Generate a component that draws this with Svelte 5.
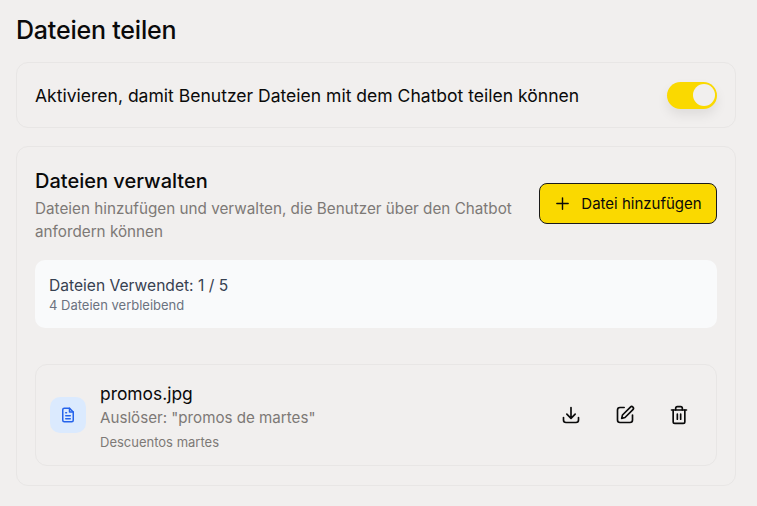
<script>
  let enabled = $state(true);

  const file = {
    name: 'promos.jpg',
    trigger: 'Auslöser: "promos de martes"',
    note: 'Descuentos martes',
  };
</script>

<div class="page">
  <h1>Dateien teilen</h1>

  <section class="card toggle-card">
    <span class="toggle-label">Aktivieren, damit Benutzer Dateien mit dem Chatbot teilen können</span>
    <button class="toggle" class:on={enabled} aria-label="Aktivieren" onclick={() => (enabled = !enabled)}>
      <span class="knob"></span>
    </button>
  </section>

  <section class="card manage">
    <div class="manage-head">
      <div class="manage-text">
        <h2>Dateien verwalten</h2>
        <p>Dateien hinzufügen und verwalten, die Benutzer über den Chatbot anfordern können</p>
      </div>
      <button class="add">
        <svg width="17" height="17" viewBox="0 0 24 24" fill="none" stroke="currentColor" stroke-width="2" stroke-linecap="round"><path d="M12 4v16M4 12h16" /></svg>
        Datei hinzufügen
      </button>
    </div>

    <div class="usage">
      <div class="usage-main">Dateien Verwendet: 1 / 5</div>
      <div class="usage-sub">4 Dateien verbleibend</div>
    </div>

    <div class="file">
      <div class="file-icon">
        <svg width="18" height="18" viewBox="0 0 24 24" fill="none" stroke="#2563eb" stroke-width="2" stroke-linecap="round" stroke-linejoin="round">
          <path d="M14 3H7a2 2 0 0 0-2 2v14a2 2 0 0 0 2 2h10a2 2 0 0 0 2-2V8z" />
          <path d="M14 3v5h5" />
          <path d="M9 9h1M9 13h6M9 17h6" />
        </svg>
      </div>
      <div class="file-info">
        <div class="file-name">{file.name}</div>
        <div class="file-trigger">{file.trigger}</div>
        <div class="file-note">{file.note}</div>
      </div>
      <div class="actions">
        <button class="action" aria-label="Herunterladen">
          <svg width="20" height="20" viewBox="0 0 24 24" fill="none" stroke="currentColor" stroke-width="2" stroke-linecap="round" stroke-linejoin="round">
            <path d="M3 15v3a3 3 0 0 0 3 3h12a3 3 0 0 0 3-3v-3" />
            <path d="M12 3v13M7 11l5 5 5-5" />
          </svg>
        </button>
        <button class="action" aria-label="Bearbeiten">
          <svg width="20" height="20" viewBox="0 0 24 24" fill="none" stroke="currentColor" stroke-width="2" stroke-linecap="round" stroke-linejoin="round">
            <path d="M11 3H6a3 3 0 0 0-3 3v12a3 3 0 0 0 3 3h12a3 3 0 0 0 3-3v-6" />
            <path d="M18.5 2.5a2.1 2.1 0 0 1 3 3L12 15l-4 1 1-4z" />
          </svg>
        </button>
        <button class="action" aria-label="Löschen">
          <svg width="20" height="20" viewBox="0 0 24 24" fill="none" stroke="currentColor" stroke-width="2" stroke-linecap="round" stroke-linejoin="round">
            <path d="M3 6h18" />
            <path d="M8 6V4a2 2 0 0 1 2-2h4a2 2 0 0 1 2 2v2" />
            <path d="M5 6v14a2 2 0 0 0 2 2h10a2 2 0 0 0 2-2V6" />
            <path d="M10 11v6M14 11v6" />
          </svg>
        </button>
      </div>
    </div>
  </section>
</div>

<style>
  :global(body) {
    margin: 0;
    background: #f1efee;
    font-family: Inter, "Noto Sans", sans-serif;
    color: #0a0a0a;
  }

  .page {
    width: 720px;
    padding: 14px 0 0 16px;
  }

  h1 {
    margin: 0 0 15px;
    font-size: 25px;
    line-height: 33px;
    font-weight: 500;
    letter-spacing: -0.2px;
  }

  .card {
    border: 1px solid #e8e6e5;
    border-radius: 12px;
    box-sizing: border-box;
  }

  .toggle-card {
    height: 66px;
    padding: 0 18px;
    display: flex;
    align-items: center;
    justify-content: space-between;
    margin-bottom: 18px;
  }

  .toggle-label {
    font-size: 17.55px;
    padding-top: 1px;
  }

  .toggle {
    width: 50px;
    height: 27px;
    border: none;
    border-radius: 14px;
    background: #d4d4d4;
    display: flex;
    align-items: center;
    justify-content: flex-start;
    padding: 0 2px;
    box-shadow: 0 6px 12px rgba(0, 0, 0, 0.08);
  }

  .toggle.on {
    background: #fad900;
    justify-content: flex-end;
  }

  .knob {
    width: 22px;
    height: 22px;
    border-radius: 50%;
    background: #f1efee;
  }

  .manage {
    height: 340px;
    padding: 21px 18px 0;
  }

  .manage-head {
    display: flex;
    justify-content: space-between;
    align-items: flex-start;
  }

  .manage-text {
    width: 490px;
  }

  h2 {
    margin: 0 0 3px;
    font-size: 20px;
    line-height: 26px;
    font-weight: 500;
  }

  .manage-text p {
    margin: 0;
    font-size: 15.25px;
    line-height: 23px;
    color: #7d7976;
  }

  .add {
    width: 178px;
    height: 41px;
    margin-top: 15px;
    border: 1px solid #1a1a1a;
    border-radius: 8px;
    background: #fad900;
    color: #0a0a0a;
    font: inherit;
    font-size: 15px;
    display: flex;
    align-items: center;
    justify-content: center;
    gap: 10px;
  }

  .usage {
    margin-top: 17px;
    height: 68px;
    box-sizing: border-box;
    padding: 15px 14px 0;
    background: #f9fafb;
    border-radius: 10px;
  }

  .usage-main {
    font-size: 15.6px;
    line-height: 21px;
    color: #374151;
  }

  .usage-sub {
    font-size: 13px;
    line-height: 18px;
    color: #6b7280;
  }

  .file {
    margin-top: 36px;
    height: 102px;
    box-sizing: border-box;
    border: 1px solid #e8e6e5;
    border-radius: 12px;
    padding: 0 14px;
    display: flex;
    align-items: center;
    gap: 14px;
  }

  .file-icon {
    width: 36px;
    height: 36px;
    border-radius: 10px;
    background: #dbeafe;
    display: flex;
    align-items: center;
    justify-content: center;
  }

  .file-info {
    flex: 1;
    padding-top: 7px;
  }

  .file-name {
    font-size: 17.4px;
    line-height: 24px;
    font-weight: 400;
  }

  .file-trigger {
    font-size: 15.15px;
    line-height: 24px;
    color: #7d7976;
  }

  .file-note {
    font-size: 13px;
    line-height: 25px;
    color: #7d7976;
  }

  .actions {
    display: flex;
    gap: 18px;
    margin-right: 5px;
  }

  .action {
    width: 36px;
    height: 36px;
    padding: 0;
    border: none;
    background: none;
    color: #0a0a0a;
    display: flex;
    align-items: center;
    justify-content: center;
  }
</style>
